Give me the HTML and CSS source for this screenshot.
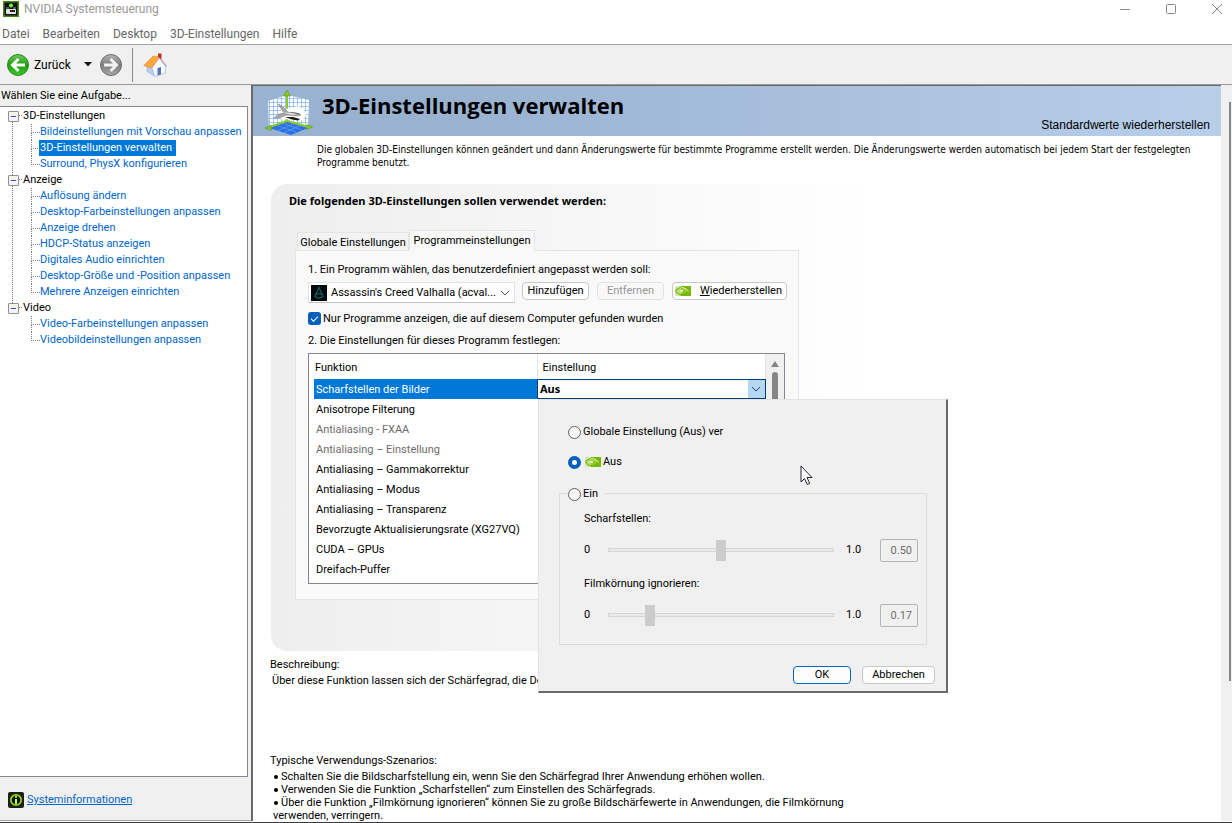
FILE: index.html
```
<!DOCTYPE html>
<html lang="de">
<head>
	<meta charset="UTF-8">
	<title>NVIDIA Systemsteuerung</title>
	<link rel="stylesheet" href="styles.css">
</head>
<body>
<!-- shared nvidia eye badge -->
<svg width="0" height="0" class="defs">
	<defs>
		<symbol id="nv" viewBox="0 0 16 10" preserveAspectRatio="none">
			<rect width="16" height="10" fill="#d4e8b0"/>
			<path d="M6 0h10v10H6z" fill="#76b900"/>
			<path d="M6 1.500C3 1.700 1 4 .8 5 2 7.500 4.500 8.800 7 8.800c3 0 5-1.500 6.500-3" fill="none" stroke="#76b900" stroke-width="1.200"/>
			<path d="M6 1.500c4 0 6 2 7.500 4" fill="none" stroke="#d9efb0" stroke-width="1.200"/>
			<path d="M6 3.200C4 3.400 3 4.500 3 5c.7 1.300 2 2.200 4 2.200 2 0 3-1 4-2.200C10 3.700 8 3 6 3.200z" fill="none" stroke="#a9d552" stroke-width="1.100"/>
			<circle cx="7" cy="5" r="1.200" fill="#e2f2c4"/>
		</symbol>
	</defs>
</svg>

<header>
	<div class="titlebar">
		<svg class="app-icon" width="16" height="16" viewBox="0 0 16 16">
			<rect x=".75" y=".75" width="14.500" height="14.500" fill="#111" stroke="#4a8a10" stroke-width="1.500"/>
			<circle cx="8" cy="4.500" r="2" fill="#6dff2a"/>
			<path d="M3 7h3M10 7h3" stroke="#999"/>
			<rect x="3" y="8" width="10" height="5" rx="1" fill="#e4e4e4"/>
			<rect x="7" y="9" width="5" height="2" fill="#222"/>
		</svg>
		<span class="caption">NVIDIA Systemsteuerung</span>
		<div class="win-btns">
			<button type="button" aria-label="Minimieren"><svg width="12" height="12"><path d="M1 6.500h10" stroke="#888"/></svg></button>
			<button type="button" aria-label="Maximieren"><svg width="12" height="12"><rect x="1.500" y="1.500" width="9" height="9" rx="1" fill="none" stroke="#888"/></svg></button>
			<button type="button" aria-label="Schließen"><svg width="12" height="12"><path d="M1 1l10 10M11 1L1 11" stroke="#888"/></svg></button>
		</div>
	</div>
	<nav class="menubar">
		<a href="#">Datei</a>
		<a href="#">Bearbeiten</a>
		<a href="#">Desktop</a>
		<a href="#">3D-Einstellungen</a>
		<a href="#">Hilfe</a>
	</nav>
	<div class="toolbar">
		<button type="button" class="back">
			<svg width="24" height="24" viewBox="0 0 24 24">
				<defs>
					<linearGradient id="gr" x1="0" y1="0" x2="0" y2="1"><stop offset="0" stop-color="#6fc95a"/><stop offset=".5" stop-color="#1fa010"/><stop offset="1" stop-color="#3fc62a"/></linearGradient>
				</defs>
				<circle cx="12" cy="12" r="10.500" fill="url(#gr)" stroke="#2c8a22"/>
				<path d="M19 12H7M12.500 6L6.500 12l6 6" fill="none" stroke="#fff" stroke-width="3"/>
			</svg>
			<span>Zurück</span>
		</button>
		<button type="button" class="drop" aria-label="Verlauf"><svg width="8" height="5"><path d="M0 0h8L4 4.500z" fill="#111"/></svg></button>
		<button type="button" aria-label="Vor">
			<svg width="24" height="24" viewBox="0 0 24 24">
				<defs>
					<linearGradient id="gy" x1="0" y1="0" x2="0" y2="1"><stop offset="0" stop-color="#b5b5b5"/><stop offset=".5" stop-color="#7d7d7d"/><stop offset="1" stop-color="#a8a8a8"/></linearGradient>
				</defs>
				<circle cx="12" cy="12" r="10.500" fill="url(#gy)" stroke="#6e6e6e"/>
				<path d="M5 12h12M11.500 6l6 6-6 6" fill="none" stroke="#f2f2f2" stroke-width="3"/>
			</svg>
		</button>
		<span class="sep"></span>
		<button type="button" aria-label="Startseite">
			<svg width="24" height="24" viewBox="0 0 24 24">
				<path d="M4 13l5 1.500 2.500 8.500L4 18.500z" fill="#b4cff2" stroke="#8fb0de" stroke-width=".6"/>
				<path d="M9 14.500L16.500 5l6 8v7L11.500 23.500z" fill="#f6faff" stroke="#8fb0de" stroke-width=".6"/>
				<path d="M14.500 15l3.500-1v7.500l-3.500 1z" fill="#5673b4"/>
				<path d="M.8 12.500L10 3l6.500 1L8.500 15z" fill="#ffa63c" stroke="#e98a20" stroke-width=".6"/>
				<path d="M16 4l7.500 9.500" stroke="#b9a8a8" stroke-width="1.500"/>
				<path d="M15 .5h3.500V6L15 4z" fill="#c0321c"/>
			</svg>
		</button>
	</div>
</header>

<div class="main">
	<aside>
		<p class="aside-title">Wählen Sie eine Aufgabe...</p>
		<div class="tree">
			<ul class="root">
				<li>
					<span class="node">3D-Einstellungen</span>
					<ul>
						<li><a href="#">Bildeinstellungen mit Vorschau anpassen</a></li>
						<li><a href="#" class="selected">3D-Einstellungen verwalten</a></li>
						<li><a href="#">Surround, PhysX konfigurieren</a></li>
					</ul>
				</li>
				<li>
					<span class="node">Anzeige</span>
					<ul>
						<li><a href="#">Auflösung ändern</a></li>
						<li><a href="#">Desktop-Farbeinstellungen anpassen</a></li>
						<li><a href="#">Anzeige drehen</a></li>
						<li><a href="#">HDCP-Status anzeigen</a></li>
						<li><a href="#">Digitales Audio einrichten</a></li>
						<li><a href="#">Desktop-Größe und -Position anpassen</a></li>
						<li><a href="#">Mehrere Anzeigen einrichten</a></li>
					</ul>
				</li>
				<li>
					<span class="node">Video</span>
					<ul>
						<li><a href="#">Video-Farbeinstellungen anpassen</a></li>
						<li><a href="#">Videobildeinstellungen anpassen</a></li>
					</ul>
				</li>
			</ul>
		</div>
		<div class="sysinfo">
			<svg width="16" height="16" viewBox="0 0 16 16">
				<rect width="16" height="16" rx="2" fill="#1b1f14"/>
				<circle cx="8" cy="8" r="5.200" fill="#10140a" stroke="#8fd21a" stroke-width="1.800"/>
				<circle cx="8" cy="5" r="1.100" fill="#c8f26a"/>
				<path d="M8 7v5" stroke="#c8f26a" stroke-width="2"/>
			</svg>
			<a href="#">Systeminformationen</a>
		</div>
	</aside>

	<section class="content">
		<div class="page">
			<div class="banner">
				<svg width="48" height="48" viewBox="0 0 48 48">
					<defs>
						<pattern id="grid" width="4" height="4" patternUnits="userSpaceOnUse"><path d="M0 .5h4M.5 0v4" stroke="#8ab8f2" stroke-width=".8"/></pattern>
					</defs>
					<path d="M3 11l19-6v26L4 38z" fill="#fff"/><path d="M3 11l19-6v26L4 38z" fill="url(#grid)"/>
					<path d="M22 5l22 5-1 28-21-7z" fill="#fff"/><path d="M22 5l22 5-1 28-21-7z" fill="url(#grid)"/>
					<path d="M22 31l21 7-17 7-22-7z" fill="#2a72e4"/>
					<path d="M11 35l20 7M17 33l20 7M12 41l19-8M18 43l19-8" stroke="#69a3f5" stroke-width=".6"/>
					<path d="M22 31V4M22 31L3 37.500M22 31l22 6" fill="none" stroke="#8ac926" stroke-width="2"/>
					<path d="M18.500 6L22 0l3.500 6zM0 38l6-2.500v5zM47.500 37l-6 2.500.5-5z" fill="#8ac926" stroke="#5e9618" stroke-width=".6"/>
					<path d="M16 20l18-4 8 7-4 7-22-1z" fill="#fff"/>
					<path d="M20 27l8 0 7 2-2 1.500-6-1zM25 22l8 1 3 2-9-.5z" fill="#1c1c1c"/>
					<path d="M13 14l4 2 6 6 11 2 2 1-4 1-10-1-8 3-5 0 5-4 5-1z" fill="#a6a6a6" stroke="#868686" stroke-width=".6"/>
					<path d="M18 22.500l9 .5 5 1.500-6 0z" fill="#eee"/>
				</svg>
				<h1>3D-Einstellungen verwalten</h1>
				<a href="#" class="restore">Standardwerte wiederherstellen</a>
			</div>
			<p class="intro">Die globalen 3D-Einstellungen können geändert und dann Änderungswerte für bestimmte Programme erstellt werden. Die Änderungswerte werden automatisch bei jedem Start der festgelegten Programme benutzt.</p>

			<div class="panel">
				<h2>Die folgenden 3D-Einstellungen sollen verwendet werden:</h2>
				<div class="tabs">
					<button type="button">Globale Einstellungen</button>
					<button type="button" class="active">Programmeinstellungen</button>
				</div>
				<div class="pane">
					<label for="prog" class="step">1. Ein Programm wählen, das benutzerdefiniert angepasst werden soll:</label>
					<div class="row">
						<div class="combo">
							<svg width="16" height="16" viewBox="0 0 16 16">
								<rect width="16" height="16" fill="#03090b"/>
								<path d="M8 2.500L4.500 10 8 8.500l3.500 1.500z" fill="none" stroke="#14595d" stroke-width="1.300"/>
								<path d="M3.500 11q4.500 4.500 9 0" fill="none" stroke="#14595d" stroke-width="1.300"/>
							</svg>
							<select id="prog"><option>Assassin's Creed Valhalla (acval...</option></select>
							<svg class="chev" width="10" height="6"><path d="M1 1l4 4 4-4" fill="none" stroke="#555"/></svg>
						</div>
						<button type="button" class="btn add">Hinzufügen</button>
						<button type="button" class="btn del" disabled>Entfernen</button>
						<button type="button" class="btn reset"><svg width="16" height="10"><use href="#nv" width="16" height="10"/></svg><span><u>W</u>iederherstellen</span></button>
					</div>
					<div class="check">
						<input type="checkbox" id="only" checked>
						<label for="only">Nur Programme anzeigen, die auf diesem Computer gefunden wurden</label>
					</div>
					<p class="step">2. Die Einstellungen für dieses Programm festlegen:</p>

					<div class="grid">
						<div class="list">
							<table>
								<thead>
									<tr><th>Funktion</th><th>Einstellung</th></tr>
								</thead>
								<tbody>
									<tr class="sel">
										<td>Scharfstellen der Bilder</td>
										<td class="value"><button type="button"><b>Aus</b><span><svg width="10" height="6"><path d="M1 1l4 4 4-4" fill="none" stroke="#345"/></svg></span></button></td>
									</tr>
									<tr><td>Anisotrope Filterung</td><td></td></tr>
									<tr class="off"><td>Antialiasing - FXAA</td><td></td></tr>
									<tr class="off"><td>Antialiasing – Einstellung</td><td></td></tr>
									<tr><td>Antialiasing – Gammakorrektur</td><td></td></tr>
									<tr><td>Antialiasing – Modus</td><td></td></tr>
									<tr><td>Antialiasing – Transparenz</td><td></td></tr>
									<tr><td>Bevorzugte Aktualisierungsrate (XG27VQ)</td><td></td></tr>
									<tr><td>CUDA – GPUs</td><td></td></tr>
									<tr><td>Dreifach-Puffer</td><td></td></tr>
								</tbody>
							</table>
							<div class="list-scroll">
								<svg width="10" height="7"><path d="M5 0l4 6H1z" fill="#858585"/></svg>
								<span></span>
							</div>
						</div>

						<form class="popup">
							<div class="opt">
								<input type="radio" name="mode" id="m1">
								<label for="m1">Globale Einstellung (Aus) ver</label>
							</div>
							<div class="opt">
								<input type="radio" name="mode" id="m2" checked>
								<label for="m2"><svg width="16" height="10"><use href="#nv" width="16" height="10"/></svg>Aus</label>
							</div>
							<div class="group">
								<div class="opt legend">
									<input type="radio" name="mode" id="m3">
									<label for="m3">Ein</label>
								</div>
								<label for="s1">Scharfstellen:</label>
								<div class="slide">
									<span>0</span>
									<input type="range" id="s1" min="0" max="100" value="50" disabled>
									<span>1.0</span>
									<input type="text" value="0.50" aria-label="Scharfstellen Wert" disabled>
								</div>
								<label for="s2">Filmkörnung ignorieren:</label>
								<div class="slide">
									<span>0</span>
									<input type="range" id="s2" min="0" max="100" value="17" disabled>
									<span>1.0</span>
									<input type="text" value="0.17" aria-label="Filmkörnung Wert" disabled>
								</div>
							</div>
							<div class="actions">
								<button type="button" class="btn ok">OK</button>
								<button type="button" class="btn cancel">Abbrechen</button>
							</div>
							<svg class="cursor" width="14" height="22" viewBox="0 0 14 22"><path d="M1 1v16l3.500-3.500 2.800 6 2.400-1.100-2.700-5.900H12z" fill="#fff" stroke="#223" stroke-width="1"/></svg>
						</form>
					</div>
				</div>
			</div>

			<div class="desc">
				<h3>Beschreibung:</h3>
				<p>Über diese Funktion lassen sich der Schärfegrad, die De</p>
			</div>
			<div class="usage">
				<h3>Typische Verwendungs-Szenarios:</h3>
				<ul>
					<li>Schalten Sie die Bildscharfstellung ein, wenn Sie den Schärfegrad Ihrer Anwendung erhöhen wollen.</li>
					<li>Verwenden Sie die Funktion „Scharfstellen“ zum Einstellen des Schärfegrads.</li>
					<li>Über die Funktion „Filmkörnung ignorieren“ können Sie zu große Bildschärfewerte in Anwendungen, die Filmkörnung verwenden, verringern.</li>
				</ul>
			</div>
		</div>
		<div class="page-scroll"><span></span></div>
	</section>
</div>
</body>
</html>
```
FILE: styles.css
```
*{
	box-sizing:border-box;
}
body,ul,h1,h2,h3,p{
	margin:0;
	padding:0;
}
body{
	display:flex;
	flex-direction:column;
	height:100vh;
	overflow:hidden;
	background:#fff;
	border-bottom:1px solid #3c3c40;
	font:11px/16px Roboto, sans-serif;
	color:#000;
}
button,input,select{
	font:inherit;
	color:inherit;
	margin:0;
	padding:0;
}
button{
	background:none;
	border:none;
	white-space:nowrap;
}
svg{
	display:block;
	flex:none;
}
a{
	text-decoration:none;
	color:#0066cc;
}
li{
	list-style:none;
}
.defs{
	position:absolute;
}

/* title, menu, toolbar */
.titlebar{
	display:flex;
	align-items:center;
	height:20px;
	padding:0 9px 2px 3px;
	font-size:12px;
	color:#999;
}
.caption{
	margin-left:5px;
}
.win-btns{
	display:flex;
	gap:34px;
	margin-left:auto;
}
.menubar{
	display:flex;
	gap:13px;
	height:24px;
	padding:6px 2px 0;
	font-size:12px;
}
.menubar a{
	color:#666;
}
.toolbar{
	display:flex;
	align-items:center;
	height:41px;
	padding:0 6px;
	border-top:1px solid #a0a0a0;
	border-bottom:1px solid #9a9a9a;
	background:#f0f0f0;
	font-size:12px;
}
.back{
	display:flex;
	align-items:center;
	gap:4px;
}
.drop{
	margin:0 7px 0 13px;
}
.sep{
	width:1px;
	height:34px;
	margin:0 10px 0 9px;
	background:#8c8c8c;
}

/* left side */
.main{
	display:flex;
	flex:1;
	min-height:0;
	padding-bottom:1px;
}
aside{
	display:flex;
	flex-direction:column;
	flex:none;
	width:251px;
	padding-right:3px;
	border-bottom:1px solid #a0a0a0;
	background:#f0f0f0;
}
.aside-title{
	padding:3px 0 2px 1px;
}
.tree{
	flex:1;
	border:1px solid #828790;
	border-left:none;
	background:#fff;
}
.root{
	padding:1px 0 0 8px;
}
.tree li{
	position:relative;
	white-space:nowrap;
}
.node{
	display:block;
	padding-left:15px;
}
.node:before{
	content:'';
	position:absolute;
	left:0;
	top:3px;
	width:9px;
	height:9px;
	border:1px solid #919191;
	border-radius:1px;
	background:linear-gradient(#3c4f9c,#3c4f9c) center/5px 1px no-repeat #f4f4f4;
	z-index:1;
}
.node:after{
	content:'';
	position:absolute;
	left:9px;
	top:7px;
	width:5px;
	border-top:1px dotted #808080;
}
.root > li:not(:last-child):before{
	content:'';
	position:absolute;
	left:4px;
	top:12px;
	bottom:-3px;
	border-left:1px dotted #808080;
}
.tree ul ul{
	margin-left:23px;
}
.tree ul ul li{
	padding-left:8px;
	height:16px;
}
.tree ul ul li:before{
	content:'';
	position:absolute;
	left:0;
	top:0;
	width:8px;
	height:8px;
	border-left:1px dotted #808080;
	border-bottom:1px dotted #808080;
}
.tree ul ul li:not(:last-child):after{
	content:'';
	position:absolute;
	left:0;
	top:8px;
	height:8px;
	border-left:1px dotted #808080;
}
.tree a{
	display:inline-block;
	padding:0 4px 0 1px;
}
.tree .selected{
	background:#0078d7;
	color:#fff;
}
.sysinfo{
	display:flex;
	align-items:center;
	gap:3px;
	height:43px;
	padding:3px 0 0 8px;
}
.sysinfo a{
	text-decoration:underline;
}

/* right side */
.content{
	display:flex;
	flex:1;
	min-width:0;
	border-left:2px solid #696969;
}
.page{
	flex:1;
	min-width:0;
	overflow:hidden;
}
.page-scroll{
	flex:none;
	width:11px;
	padding:17px 1px 140px 8px;
	background:#f0f0f0;
}
.page-scroll span{
	display:block;
	height:100%;
	background:#858585;
}
.banner{
	display:flex;
	height:51px;
	padding:4px 11px 0 12px;
	border-top:1px solid #696969;
	background:linear-gradient(90deg,#99b2d0 20%,#b8cfea);
}
h1{
	margin-left:9px;
	font:bold 22px/30px "Open Sans", sans-serif;
}
.restore{
	margin:27px 0 0 auto;
	font:12px/16px "Liberation Sans", sans-serif;
	color:#000;
}
.intro{
	padding:7px 0 0 64px;
	font:10px/13px "DejaVu Sans Condensed", "DejaVu Sans", sans-serif;
}
.panel{
	margin:15px 0 0 18px;
	padding:9px 0 51px 18px;
	border-radius:16px;
	background:linear-gradient(90deg,#eee,#fff 600px);
}
h2{
	font:bold 11px/16px "Noto Sans", sans-serif;
}
.tabs{
	display:flex;
	align-items:flex-end;
	margin:21px 0 0 8px;
	height:20px;
}
.tabs button{
	height:18px;
	width:112px;
	padding-top:2px;
	border:1px solid #e5e5e5;
	border-bottom:none;
	background:#f3f3f3;
}
.tabs .active{
	height:21px;
	width:126px;
	margin-bottom:-1px;
	padding:0 0 1px;
	background:#f9f9f9;
	z-index:1;
}
.pane{
	width:504px;
	margin-left:6px;
	padding:11px 13px 15px 12px;
	border:1px solid #e5e5e5;
	background:#f9f9f9;
}
.step{
	display:block;
}
.row{
	display:flex;
	gap:7px;
	height:22px;
	margin:4px -2px 0 0;
}
.combo{
	display:flex;
	align-items:center;
	position:relative;
	width:207px;
	height:21px;
	padding-left:2px;
	border:1px solid #e2e2e2;
	border-bottom-color:#c4c4c4;
	background:#fff;
}
.combo select{
	flex:1;
	min-width:0;
	padding-left:4px;
	border:none;
	background:none;
	appearance:none;
}
.chev{
	position:absolute;
	right:4px;
	top:7px;
	pointer-events:none;
}
.btn{
	height:18px;
	border:1px solid #c8c8c8;
	border-radius:4px;
	background:#fdfdfd;
}
.btn:disabled{
	border-color:#e2e2e2;
	background:#f8f8f8;
	color:#999;
}
.add,.del{
	width:67px;
	margin-right:1px;
}
.reset{
	display:flex;
	align-items:center;
	justify-content:space-between;
	width:115px;
	padding:0 4px 0 2px;
}
.check{
	display:flex;
	align-items:center;
	gap:2px;
	margin:6px 0 6px;
}
.check label{
	padding-top:1px;
}
.check input{
	appearance:none;
	width:13px;
	height:13px;
	border-radius:3px;
	background:#005fb8;
	display:grid;
	place-items:center;
}
.check input:checked:before{
	content:'';
	width:6px;
	height:3px;
	margin-top:-2px;
	border:solid #fff;
	border-width:0 0 1px 1px;
	transform:rotate(-45deg);
}
.grid{
	position:relative;
	margin-top:4px;
}
.list{
	display:flex;
	align-items:stretch;
	height:231px;
	border:1px solid #828790;
	background:#fff;
}
table{
	flex:1;
	align-self:flex-start;
	margin-left:5px;
	border-collapse:collapse;
	table-layout:fixed;
}
th,td{
	padding:2px 0 0 2px;
	height:20px;
	text-align:left;
	font-weight:normal;
	white-space:nowrap;
}
th{
	height:25px;
}
th:first-child{
	width:223px;
	padding-left:1px;
}
th + th{
	padding-left:5px;
	border:1px solid #e5e5e5;
	border-width:0 1px;
}
.sel td{
	background:#0078d7;
	color:#fff;
}
.off td{
	color:#6d6d6d;
}
.sel .value{
	padding:0;
}
.value button{
	display:flex;
	justify-content:space-between;
	width:100%;
	height:20px;
	padding-left:2px;
	border:1px solid #003e73;
	background:#fff;
	color:#000;
	line-height:18px;
}
.value b{
	font-family:"Noto Sans", sans-serif;
}
.value span{
	display:grid;
	place-items:center;
	width:17px;
	background:#b3d7f5;
}
.list-scroll{
	width:18px;
	padding:7px 4px 0;
	background:#f0f0f0;
}
.list-scroll span{
	display:block;
	width:6px;
	height:90px;
	margin:4px 0 0 2px;
	border-radius:3px;
	background:#858585;
}

/* value editor */
.popup{
	position:absolute;
	left:230px;
	top:46px;
	z-index:2;
	width:410px;
	padding:24px 19px 7px 20px;
	border:1px solid #e3e3e3;
	border-right:2px solid #696969;
	border-bottom:2px solid #696969;
	background:#f0f0f0;
}
.opt{
	display:flex;
	align-items:center;
	gap:2px;
	height:16px;
	margin:0 0 14px 9px;
}
.opt input{
	appearance:none;
	width:13px;
	height:13px;
	border:1px solid #626262;
	border-radius:50%;
	background:#f6f6f6;
}
.opt input:checked{
	border:4px solid #005fb8;
	background:#fff;
}
.opt label{
	display:flex;
	align-items:center;
	gap:2px;
	white-space:nowrap;
}
.opt svg{
	margin-left:2px;
}
.group{
	border:1px solid #dcdcdc;
	margin-top:23px;
	padding:0 8px 3px 24px;
}
.legend{
	width:37px;
	margin:-8px 0 9px -16px;
	background:#f0f0f0;
}
.group > label{
	display:block;
}
.slide{
	display:flex;
	align-items:center;
	height:22px;
	margin:12px 0 15px;
}
.slide span{
	width:24px;
}
.slide span:nth-of-type(2){
	width:34px;
	margin-left:12px;
}
.slide input[type=range]{
	flex:1;
	min-width:0;
	height:22px;
	appearance:none;
	background:linear-gradient(#e7eaea,#e7eaea) center/calc(100% - 2px) 2px no-repeat, linear-gradient(#d6d6d6,#d6d6d6) center/100% 4px no-repeat;
}
.slide input[type=range]::-webkit-slider-thumb{
	appearance:none;
	width:10px;
	height:21px;
	background:#ccc;
}
.slide input[type=text]{
	width:38px;
	height:23px;
	padding-right:5px;
	border:1px solid #b4b4b4;
	border-radius:2px;
	background:#f0f0f0;
	color:#6d6d6d;
	text-align:right;
}
.actions{
	display:flex;
	justify-content:flex-end;
	gap:11px;
	margin:21px -8px 0 0;
}
.ok{
	width:58px;
	border-color:#0067c0;
}
.cancel{
	width:73px;
}
.cursor{
	position:absolute;
	left:261px;
	top:65px;
}

/* texts below */
h3{
	font-size:11px;
	font-weight:normal;
	line-height:16px;
}
.desc,.usage{
	padding:6px 0 0 17px;
}
.desc p{
	padding-left:2px;
	white-space:nowrap;
}
.usage{
	width:600px;
	margin-top:58px;
}
.usage ul{
	margin:1px 0 0 3px;
	line-height:13px;
}
.usage li:before{
	content:'';
	display:inline-block;
	width:4px;
	height:4px;
	margin:0 3px 1px 1px;
	border-radius:50%;
	background:#000;
}
```
